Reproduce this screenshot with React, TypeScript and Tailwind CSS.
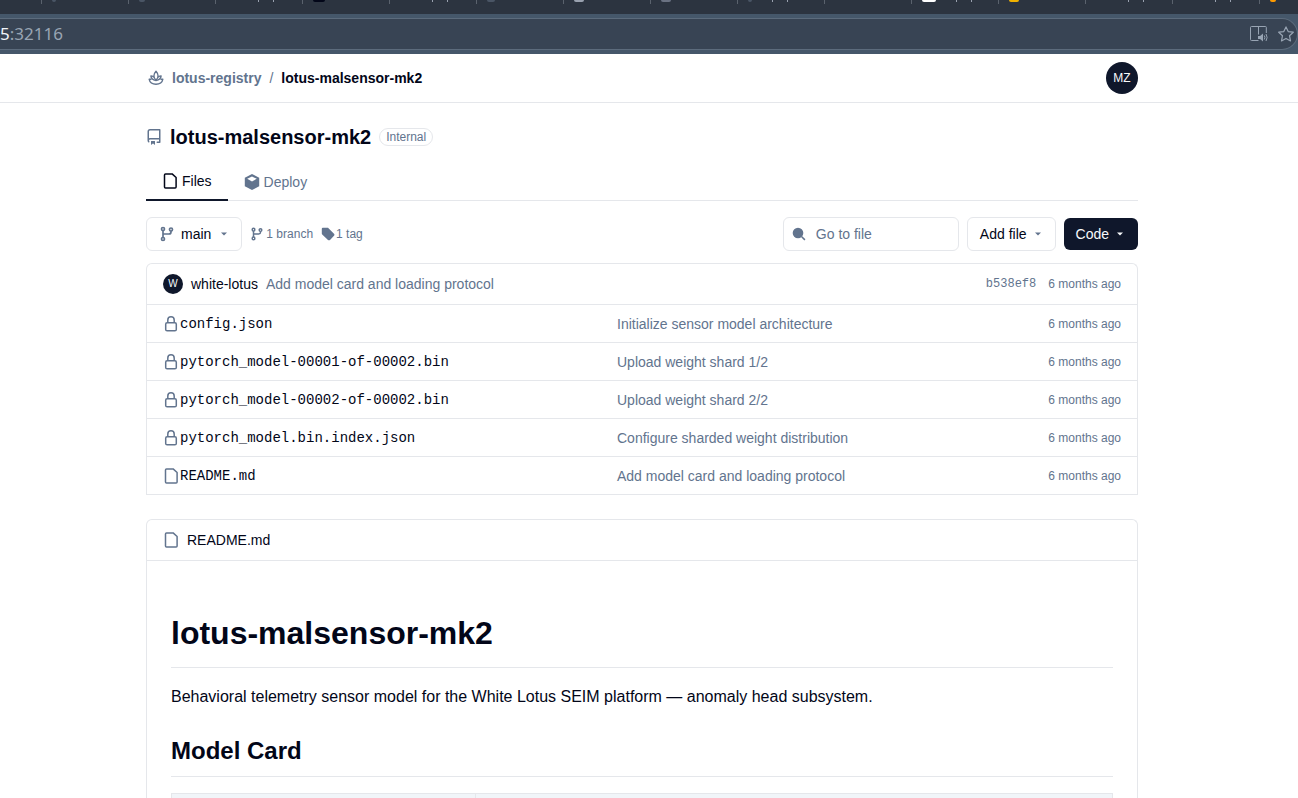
import React from 'react';

type IconProps = { className?: string };

const tabs = [
  { id: 1, mark: 'w-1 bg-gray-600', tail: false },
  { id: 2, mark: 'w-1.5 bg-gray-600', tail: false },
  { id: 3, mark: 'w-3', tail: true },
  { id: 4, mark: 'w-3 bg-slate-950', tail: false },
  { id: 5, mark: 'w-3', tail: true },
  { id: 6, mark: 'w-2 bg-gray-600', tail: false },
  { id: 7, mark: 'w-2.5 bg-gray-400', tail: false },
  { id: 8, mark: 'w-2.5 bg-gray-500', tail: false },
  { id: 9, mark: 'w-1 bg-gray-600', tail: true },
  { id: 10, mark: 'w-3', tail: false },
  { id: 11, mark: 'w-3.5 bg-white', tail: true },
  { id: 12, mark: 'w-2.5 bg-yellow-500', tail: false },
  { id: 13, mark: 'w-3', tail: true },
  { id: 14, mark: 'w-3', tail: true },
  { id: 15, mark: 'w-1.5 bg-amber-500', tail: false },
];

const files = [
  { name: 'config.json', message: 'Initialize sensor model architecture', locked: true },
  { name: 'pytorch_model-00001-of-00002.bin', message: 'Upload weight shard 1/2', locked: true },
  { name: 'pytorch_model-00002-of-00002.bin', message: 'Upload weight shard 2/2', locked: true },
  { name: 'pytorch_model.bin.index.json', message: 'Configure sharded weight distribution', locked: true },
  { name: 'README.md', message: 'Add model card and loading protocol', locked: false },
];

function LotusIcon({ className }: IconProps) {
  return (
    <svg className={className} viewBox="0 0 16 16" fill="none" stroke="currentColor" strokeWidth="1.4" strokeLinejoin="round" strokeLinecap="round" aria-hidden="true">
      <path d="M8 1.2C6.500 2.800 5.900 4.300 5.900 5.900c0 1.500.7 2.900 2.100 4.100 1.400-1.200 2.100-2.600 2.100-4.100C10.100 4.300 9.500 2.800 8 1.200Z" />
      <path d="M5.500 6.800C4.700 6.200 3.800 5.900 2.900 5.900c.2 2.500 2 4.100 5.100 4.600 3.100-.5 4.900-2.100 5.100-4.600-.9 0-1.800.3-2.600.9" />
      <path d="M3 9.300H1.200c.6 3 3 4.900 6.800 4.900s6.200-1.900 6.800-4.900H13" />
    </svg>
  );
}

function RepoIcon({ className }: IconProps) {
  return (
    <svg className={className} viewBox="0 0 16 16" fill="currentColor" aria-hidden="true">
      <path d="M1.500 2.500A2.500 2.500 0 0 1 4 0h9.750a.75.75 0 0 1 .75.75v12.500a.75.75 0 0 1-.75.75h-2.500a.75.75 0 0 1 0-1.500H13v-2H4a1 1 0 0 0-.714 1.700.75.75 0 1 1-1.072 1.050A2.495 2.495 0 0 1 1.500 11.500ZM13 1.500H4a1 1 0 0 0-1 1v6.708A2.486 2.486 0 0 1 4 9h9ZM5 12.250a.25.25 0 0 1 .25-.25h3.500a.25.25 0 0 1 .25.25v3.250a.25.25 0 0 1-.4.2l-1.450-1.087a.249.249 0 0 0-.3 0L5.400 15.700a.25.25 0 0 1-.4-.2Z" />
    </svg>
  );
}

function FileIcon({ className }: IconProps) {
  return (
    <svg className={className} viewBox="0 0 16 16" fill="none" stroke="currentColor" strokeWidth="1.5" strokeLinejoin="round" aria-hidden="true">
      <path d="M3.500.9h6.600l4 3.600v9.600a1 1 0 0 1-1 1H3.500a1 1 0 0 1-1-1V1.900a1 1 0 0 1 1-1Z" />
    </svg>
  );
}

function CubeIcon({ className }: IconProps) {
  return (
    <svg className={className} viewBox="0 0 16 16" aria-hidden="true">
      <path fill="currentColor" d="M8 0 15.200 3.800v8.400L8 16 .8 12.200V3.800Z" />
      <path fill="white" d="M8 2.400 12.800 4.800 8 7.400 3.200 4.800Z" />
    </svg>
  );
}

function BranchIcon({ className }: IconProps) {
  return (
    <svg className={className} viewBox="0 0 16 16" fill="none" stroke="currentColor" strokeWidth="1.700" aria-hidden="true">
      <circle cx="4" cy="3" r="1.500" />
      <circle cx="4" cy="13" r="1.500" />
      <circle cx="12" cy="3.500" r="1.500" />
      <path d="M4 4.500v7M12 5v1a2 2 0 0 1-2 2H4" />
    </svg>
  );
}

function TagIcon({ className }: IconProps) {
  return (
    <svg className={className} viewBox="0 0 14 14" fill="currentColor" aria-hidden="true">
      <path d="M1.800.8h4.700c.4 0 .7.100 1 .4l5.500 5.500c.6.6.6 1.400 0 2L9 12.900c-.6.6-1.400.6-2 0L1.200 7.400a1.400 1.400 0 0 1-.4-1V1.800a1 1 0 0 1 1-1Z" />
    </svg>
  );
}

function LockIcon({ className }: IconProps) {
  return (
    <svg className={className} viewBox="0 0 16 16" fill="none" stroke="currentColor" strokeWidth="1.500" aria-hidden="true">
      <rect x="2.700" y="6.800" width="10.600" height="8" rx="1.400" />
      <path d="M4.800 7V4a3.200 3.200 0 0 1 6.400 0v3" />
    </svg>
  );
}

function SearchIcon({ className }: IconProps) {
  return (
    <svg className={className} viewBox="0 0 14 14" aria-hidden="true">
      <circle cx="6" cy="6" r="5.300" fill="currentColor" />
      <path d="m9.500 9.500 3.400 3.400" stroke="currentColor" strokeWidth="1.500" />
    </svg>
  );
}

function Caret({ className }: IconProps) {
  return (
    <svg className={className} viewBox="0 0 6 4" fill="currentColor" aria-hidden="true">
      <path d="M0 .5h6L3 3.500Z" />
    </svg>
  );
}

function BrowserBar() {
  return (
    <div>
      <div className="flex h-3.5 overflow-hidden bg-[#2c3440]">
        <div className="h-1 w-[42px] shrink-0 border-r border-[#5a626d]" />
        {tabs.map((tab) => (
          <div key={tab.id} className="flex h-1 w-[87px] shrink-0 gap-5 border-r border-[#5a626d] pl-2.5">
            <div className={`h-0.5 rounded-b-sm ${tab.mark}`} />
            {tab.tail && <div className="h-0.5 w-4 border-x border-gray-400" />}
          </div>
        ))}
      </div>
      <div className="bg-[#45576a] py-1">
        <div className="flex h-8 items-center justify-between rounded-r-full border border-l-0 border-[#5c6b7c] bg-[#384454] pr-[3px]">
          <p className="font-['Noto_Sans',sans-serif] text-[17px] text-[#98a4b3]">
            <span className="text-slate-100">5</span>:32116
          </p>
          <div className="flex items-center gap-2.5 text-[#98a4b3]">
            <button type="button" aria-label="Read aloud">
              <svg className="h-4 w-[18px]" viewBox="0 0 18 16" fill="none" stroke="currentColor" aria-hidden="true">
                <path d="M8.500 14.500h-7a1 1 0 0 1-1-1v-12a1 1 0 0 1 1-1h14a.8.800 0 0 1 .8.800V7M8.500.5v8" />
                <path fill="currentColor" stroke="none" d="M8 10h2l3-2.500v8L10 13H8Z" />
                <path d="M14.300 9.500q1.200 2 0 4M16 8q2.200 3.500 0 7" />
              </svg>
            </button>
            <button type="button" aria-label="Bookmark this page">
              <svg className="size-4" viewBox="0 0 16 16" fill="none" stroke="currentColor" strokeWidth="1.200" strokeLinejoin="round" aria-hidden="true">
                <path d="m8 .9 2.200 4.700 5.100.6-3.800 3.500 1 5.200L8 12.400l-4.500 2.500 1-5.200L.7 6.200l5.100-.6Z" />
              </svg>
            </button>
          </div>
        </div>
      </div>
    </div>
  );
}

function Header() {
  return (
    <header className="border-b border-gray-200 pr-3.5">
      <div className="mx-auto flex h-12 max-w-5xl items-center justify-between px-4">
        <nav className="flex items-center gap-2 pl-0.5 text-sm font-bold">
          <LotusIcon className="size-4 text-slate-500" />
          <a href="#registry" className="text-slate-500">lotus-registry</a>
          <span className="font-normal text-slate-500">/</span>
          <a href="#repo">lotus-malsensor-mk2</a>
        </nav>
        <button type="button" className="size-8 rounded-full bg-slate-900 text-xs text-slate-50">
          MZ
        </button>
      </div>
    </header>
  );
}

function RepoToolbar() {
  return (
    <div className="mt-4 flex items-center justify-between">
      <div className="flex items-center text-xs text-slate-500">
        <button type="button" className="flex h-[34px] items-center rounded-md border border-gray-200 px-3 text-sm text-slate-950">
          <BranchIcon className="mr-1.5 size-4 text-slate-500" />
          main
          <Caret className="mr-0.5 ml-2.5 h-1 w-1.5 text-slate-500" />
        </button>
        <a href="#branches" className="ml-2 flex items-center gap-0.5">
          <BranchIcon className="size-3.5" />
          1 branch
        </a>
        <a href="#tags" className="ml-2 flex items-center gap-px">
          <TagIcon className="size-3.5" />
          1 tag
        </a>
      </div>
      <div className="flex items-center gap-2 text-sm">
        <label className="flex h-[34px] w-44 items-center gap-2.5 rounded-md border border-gray-200 px-2 text-slate-500">
          <SearchIcon className="size-3.5 shrink-0" />
          <input type="text" aria-label="Go to file" placeholder="Go to file" className="w-full min-w-0 outline-none placeholder:text-slate-500" />
        </label>
        <button type="button" className="flex h-[34px] items-center gap-2 rounded-md border border-gray-200 pr-3.5 pl-3">
          Add file
          <Caret className="h-1 w-1.5 text-slate-500" />
        </button>
        <button type="button" className="flex h-8 items-center gap-2 rounded-md bg-slate-900 pr-[15px] pl-3 text-slate-50">
          Code
          <Caret className="h-1 w-1.5" />
        </button>
      </div>
    </div>
  );
}

function FileList() {
  return (
    <section className="mt-3 rounded-t-md border border-b-0 border-gray-200 text-sm">
      <div className="flex h-10 items-center px-4">
        <span className="mr-2 flex size-5 items-center justify-center rounded-full bg-slate-900 text-[10px] text-slate-50">W</span>
        <a href="#author" className="mr-2">white-lotus</a>
        <a href="#commit" className="text-slate-500">Add model card and loading protocol</a>
        <a href="#hash" className="mr-3 ml-auto font-['Liberation_Mono',monospace] text-xs text-slate-500">b538ef8</a>
        <span className="text-xs text-slate-500">6 months ago</span>
      </div>
      <table className="w-full table-fixed border-collapse">
        <tbody>
          {files.map((file) => (
            <tr key={file.name} className="h-[38px] border-y border-gray-200">
              <td className="w-[470px] pl-4">
                <a href="#file" className="flex items-center gap-px font-['Liberation_Mono',monospace]">
                  {file.locked ? (
                    <LockIcon className="size-4 text-slate-500" />
                  ) : (
                    <FileIcon className="size-4 text-slate-500" />
                  )}
                  {file.name}
                </a>
              </td>
              <td className="text-slate-500">{file.message}</td>
              <td className="w-32 pr-4 text-right text-xs text-slate-500">6 months ago</td>
            </tr>
          ))}
        </tbody>
      </table>
    </section>
  );
}

function Readme() {
  return (
    <section className="mt-6 rounded-t-md border border-b-0 border-gray-200">
      <div className="flex h-[41px] items-center gap-2 border-b border-gray-200 px-4 text-sm">
        <FileIcon className="size-4 text-slate-500" />
        README.md
      </div>
      <article className="px-6 pt-12">
        <h1 className="border-b border-gray-200 pb-2.5 text-[32px] leading-[48px] font-bold">lotus-malsensor-mk2</h1>
        <p className="mt-4 leading-[26px]">
          Behavioral telemetry sensor model for the White Lotus SEIM platform — anomaly head subsystem.
        </p>
        <h2 className="mt-6 border-b border-gray-200 pb-2 text-2xl leading-[34px] font-bold">Model Card</h2>
        <table className="mt-4 w-full table-fixed border-collapse">
          <thead>
            <tr className="h-10 bg-slate-100">
              <th aria-label="Field" className="w-[304px] border border-gray-200" />
              <th aria-label="Value" className="border border-gray-200" />
            </tr>
          </thead>
        </table>
      </article>
    </section>
  );
}

export default function App() {
  return (
    <div className="h-screen overflow-hidden bg-white font-['Liberation_Sans',Arial,sans-serif] text-slate-950">
      <BrowserBar />
      <Header />
      <div className="pr-3.5">
        <main className="mx-auto max-w-5xl px-4 pt-5">
          <div className="flex h-7 items-center gap-2">
            <RepoIcon className="size-4 text-slate-500" />
            <h1 className="text-xl font-bold">lotus-malsensor-mk2</h1>
            <span className="rounded-full border border-gray-200 px-1.5 text-xs text-slate-500">Internal</span>
          </div>
          <nav className="mt-3 flex border-b border-gray-200 text-sm">
            <a href="#files" className="-mb-px flex h-[38px] items-center gap-1 border-b-2 border-slate-900 px-4">
              <FileIcon className="size-4" />
              Files
            </a>
            <a href="#deploy" className="flex items-center gap-1 px-4 text-slate-500">
              <CubeIcon className="size-4" />
              Deploy
            </a>
          </nav>
          <RepoToolbar />
          <FileList />
          <Readme />
        </main>
      </div>
    </div>
  );
}
